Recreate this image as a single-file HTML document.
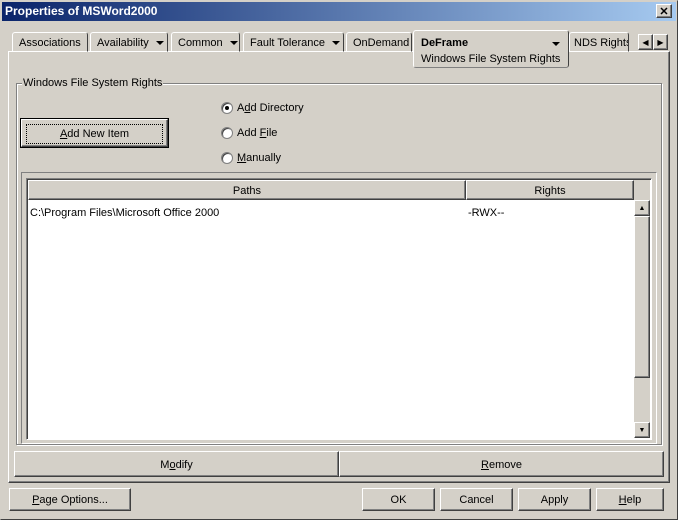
<!DOCTYPE html>
<html><head><style>
*{box-sizing:border-box;margin:0;padding:0}
body{width:678px;height:520px;background:#d4d0c8;font-family:"Liberation Sans",sans-serif;font-size:11px;color:#000;position:relative;overflow:hidden}
.a{position:absolute;white-space:nowrap}
.raised{background:#d4d0c8;border:1px solid;border-color:#fff #404040 #404040 #fff;box-shadow:inset -1px -1px 0 #808080}
.btn{display:flex;align-items:center;justify-content:center;padding-top:1px}
.tab{position:absolute;top:32px;height:20px;border:1px solid;border-color:#fff #404040 transparent #fff;border-radius:3px 3px 0 0;padding:4px 0 0 6px;white-space:nowrap;overflow:hidden}
.tri{display:inline-block;width:0;height:0;border-left:4px solid transparent;border-right:4px solid transparent;border-top:4px solid #000;vertical-align:middle;margin-left:7px}
.radio{position:absolute;width:12px;height:12px;border-radius:50%;background:#fff;border:1px solid #808080;box-shadow:inset 1px 1px 0 #404040}
u{text-decoration:underline}
</style></head><body>
<div class="a" style="left:0;top:0;width:678px;height:520px;border:1px solid;border-color:#d4d0c8 #404040 #404040 #d4d0c8"></div>
<div class="a" style="left:2px;top:2px;width:674px;height:19px;background:linear-gradient(90deg,#0a246a,#a6caf0);color:#fff;font-weight:bold;font-size:12px;padding:2px 3px">Properties of MSWord2000</div>
<div class="a raised btn" style="left:656px;top:4px;width:16px;height:14px;font-size:11px;font-weight:bold">✕</div>

<div class="a" style="left:8px;top:51px;width:662px;height:432px;border:1px solid;border-color:#fff #404040 #404040 #fff;box-shadow:inset -1px -1px 0 #808080"></div>
<div class="tab" style="left:12px;width:76px">Associations</div>
<div class="tab" style="left:90px;width:78px">Availability<span class="tri"></span></div>
<div class="tab" style="left:171px;width:69px">Common<span class="tri"></span></div>
<div class="tab" style="left:243px;width:101px">Fault Tolerance<span class="tri"></span></div>
<div class="tab" style="left:346px;width:66px">OnDemand</div>
<div class="a" style="left:413px;top:30px;width:156px;height:38px;background:#d4d0c8;border:1px solid;border-color:#fff #404040 #808080 #fff;border-radius:3px;padding:4px 0 0 7px;line-height:16px"><b>DeFrame</b><span class="tri" style="position:absolute;left:138px;top:11px;margin:0"></span><br>Windows File System Rights</div>
<div class="tab" style="left:569px;width:60px;padding-left:4px">NDS Rights</div>
<div class="a raised btn" style="left:638px;top:34px;width:15px;height:16px;font-size:8px">◀</div>
<div class="a raised btn" style="left:653px;top:34px;width:15px;height:16px;font-size:8px">▶</div>

<div class="a" style="left:16px;top:83px;width:646px;height:362px;border:1px solid #808080;box-shadow:1px 1px 0 #fff,inset 1px 1px 0 #fff"></div>
<div class="a" style="left:22px;top:77px;background:#d4d0c8;padding:0 1px">Windows File System Rights</div>

<div class="a" style="left:20px;top:118px;width:149px;height:30px;border:1px solid #000"></div>
<div class="a raised btn" style="left:21px;top:119px;width:147px;height:28px"><span style="border:1px dotted #000;width:137px;height:20px;display:flex;align-items:center;justify-content:center"><u>A</u>dd New Item</span></div>

<div class="radio" style="left:221px;top:102px"><div style="position:absolute;left:3px;top:3px;width:4px;height:4px;background:#000;border-radius:50%"></div></div>
<div class="a" style="left:237px;top:102px">A<u>d</u>d Directory</div>
<div class="radio" style="left:221px;top:127px"></div>
<div class="a" style="left:237px;top:127px">Add <u>F</u>ile</div>
<div class="radio" style="left:221px;top:152px"></div>
<div class="a" style="left:237px;top:152px"><u>M</u>anually</div>

<div class="a" style="left:21px;top:172px;width:636px;height:272px;border:1px solid;border-color:#808080 #fff #fff #808080"></div>
<div class="a" style="left:26px;top:178px;width:626px;height:262px;border:1px solid;border-color:#808080 #fff #fff #808080;background:#fff;box-shadow:inset 1px 1px 0 #404040"></div>
<div class="a" style="left:28px;top:180px;width:622px;height:20px;background:#d4d0c8"></div>
<div class="a raised btn" style="left:28px;top:180px;width:438px;height:20px">Paths</div>
<div class="a raised btn" style="left:466px;top:180px;width:168px;height:20px">Rights</div>
<div class="a" style="left:30px;top:207px">C:\Program Files\Microsoft Office 2000</div>
<div class="a" style="left:468px;top:207px">-RWX--</div>
<div class="a" style="left:634px;top:200px;width:16px;height:238px;background:#d4d0c8"></div>
<div class="a raised btn" style="left:634px;top:200px;width:16px;height:16px;font-size:7px">▲</div>
<div class="a raised" style="left:634px;top:216px;width:16px;height:162px"></div>
<div class="a raised btn" style="left:634px;top:422px;width:16px;height:16px;font-size:7px">▼</div>

<div class="a raised btn" style="left:14px;top:451px;width:325px;height:26px">M<u>o</u>dify</div>
<div class="a raised btn" style="left:339px;top:451px;width:325px;height:26px"><u>R</u>emove</div>

<div class="a raised btn" style="left:9px;top:488px;width:122px;height:23px"><u>P</u>age Options...</div>
<div class="a raised btn" style="left:362px;top:488px;width:73px;height:23px">OK</div>
<div class="a raised btn" style="left:440px;top:488px;width:73px;height:23px">Cancel</div>
<div class="a raised btn" style="left:518px;top:488px;width:73px;height:23px">Apply</div>
<div class="a raised btn" style="left:596px;top:488px;width:68px;height:23px"><u>H</u>elp</div>
</body></html>
